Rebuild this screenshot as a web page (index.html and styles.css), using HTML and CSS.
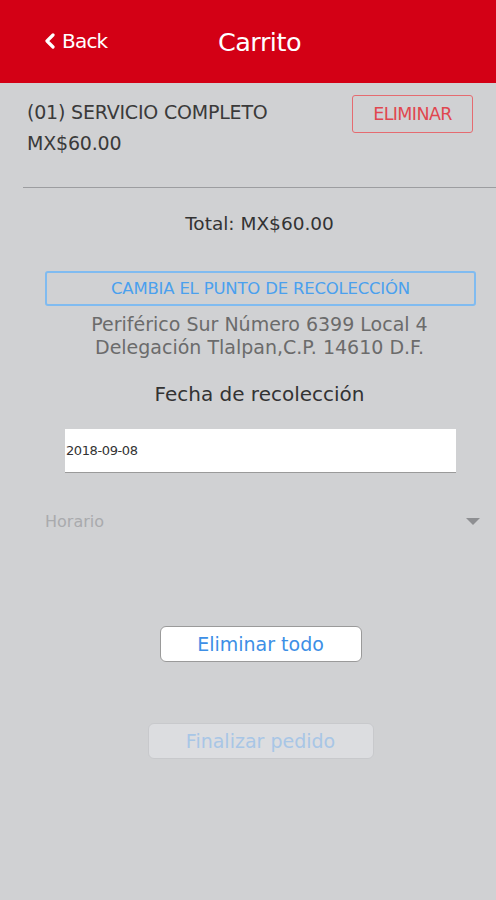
FILE: index.html
```html
<!doctype html>
<html>
  <head>
    <title>Carrito</title>
    <meta name="viewport" content="width=device-width, initial-scale=1.0" />
    <link rel="stylesheet" href="styles.css">
  </head>
  <body>
    <div class="header">
      <a class="back" href="#">
        <svg width="12" height="16" viewBox="0 0 12 16"><path d="M9 2 L3 8 L9 14" fill="none" stroke="white" stroke-width="3.2" stroke-linecap="round" stroke-linejoin="round"/></svg>
        Back
      </a>
      <h1>Carrito</h1>
    </div>

    <div class="content">
      <div class="item">
        <div class="item-info">
          <div>(01) SERVICIO COMPLETO</div>
          <div>MX$60.00</div>
        </div>
        <button class="btn-delete">ELIMINAR</button>
      </div>
      <hr>

      <p class="total">Total: MX$60.00</p>

      <button class="btn-point">CAMBIA EL PUNTO DE RECOLECCIÓN</button>
      <p class="address">Periférico Sur Número 6399 Local 4<br>Delegación Tlalpan,C.P. 14610 D.F.</p>

      <p class="label">Fecha de recolección</p>
      <div class="date">2018-09-08</div>

      <div class="select">
        <span>Horario</span>
        <span class="caret"></span>
      </div>

      <div class="actions">
        <button class="btn-white">Eliminar todo</button>
        <button class="btn-disabled">Finalizar pedido</button>
      </div>
    </div>
  </body>
</html>
```

FILE: styles.css
```css
body {
  font-family: "DejaVu Sans", sans-serif;
  margin: 0;
  padding: 0;
  background-color: #d0d1d3;
  color: #333;
  height: 900px;
}

.header {
  height: 83px;
  background-color: #d30015;
  display: flex;
  align-items: center;
  position: relative;
  color: white;
}

.back {
  display: flex;
  align-items: center;
  gap: 6px;
  margin-left: 44px;
  margin-top: -2px;
  color: white;
  text-decoration: none;
  font-size: 20px;
  letter-spacing: -0.8px;
}

.header h1 {
  position: absolute;
  left: 23px;
  right: 0;
  top: 1px;
  margin: 0;
  line-height: 83px;
  text-align: center;
  font-weight: normal;
  font-size: 25.5px;
  letter-spacing: -0.5px;
  pointer-events: none;
}

.content {
  padding-left: 23px;
}

.item {
  display: flex;
  justify-content: space-between;
  align-items: flex-start;
  padding: 14px 23px 0 4px;
  height: 90px;
  box-sizing: border-box;
}

.item-info {
  font-size: 19px;
  line-height: 31px;
  color: #3a3a3a;
  letter-spacing: -0.2px;
}

.btn-delete {
  margin-top: -2px;
  width: 121px;
  height: 38px;
  background: transparent;
  border: 1.5px solid #e56b70;
  border-radius: 3px;
  color: #e0474f;
  font-family: inherit;
  font-size: 17.5px;
  letter-spacing: -0.6px;
}

hr {
  margin: 14px 0 0;
  border: none;
  border-top: 1.5px solid #9c9da0;
}

.total {
  text-align: center;
  margin: 24px 0 0;
  font-size: 18.5px;
  line-height: 24px;
  color: #333;
}

.btn-point {
  display: block;
  margin: 35px 20px 0 22px;
  width: calc(100% - 42px);
  height: 35px;
  background: transparent;
  border: 2px solid #80bbf0;
  border-radius: 3px;
  color: #4aa0ee;
  font-family: inherit;
  font-size: 16.5px;
  letter-spacing: -0.2px;
}

.address {
  margin: 7px 0 0;
  text-align: center;
  color: #6b6b6b;
  font-size: 19px;
  line-height: 23px;
}

.label {
  margin: 23px 0 0;
  text-align: center;
  font-size: 20px;
  line-height: 24px;
  color: #333;
}

.date {
  margin: 23px 40px 0 42px;
  height: 43px;
  background: white;
  border-bottom: 1px solid #9a9a9a;
  display: flex;
  align-items: center;
  padding-left: 1px;
  font-size: 13px;
  letter-spacing: -0.4px;
  color: #333;
}

.select {
  display: flex;
  justify-content: space-between;
  align-items: center;
  margin: 38px 16px 0 22px;
  height: 20px;
  color: #a9aaad;
  font-size: 16px;
}

.caret {
  width: 0;
  height: 0;
  border-left: 7px solid transparent;
  border-right: 7px solid transparent;
  border-top: 7px solid #8e8f92;
}

.actions {
  display: flex;
  flex-direction: column;
  align-items: center;
  padding-left: 2px;
}

.btn-white {
  margin-top: 95px;
  width: 202px;
  height: 36px;
  background: white;
  border: 1px solid #9a9a9a;
  border-radius: 6px;
  color: #3d8fe6;
  font-family: inherit;
  font-size: 19px;
}

.btn-disabled {
  margin-top: 61px;
  width: 226px;
  height: 36px;
  background: #dcdde0;
  border: 1px solid #c8c9cc;
  border-radius: 6px;
  color: #a8c6e6;
  font-family: inherit;
  font-size: 19px;
}
```
